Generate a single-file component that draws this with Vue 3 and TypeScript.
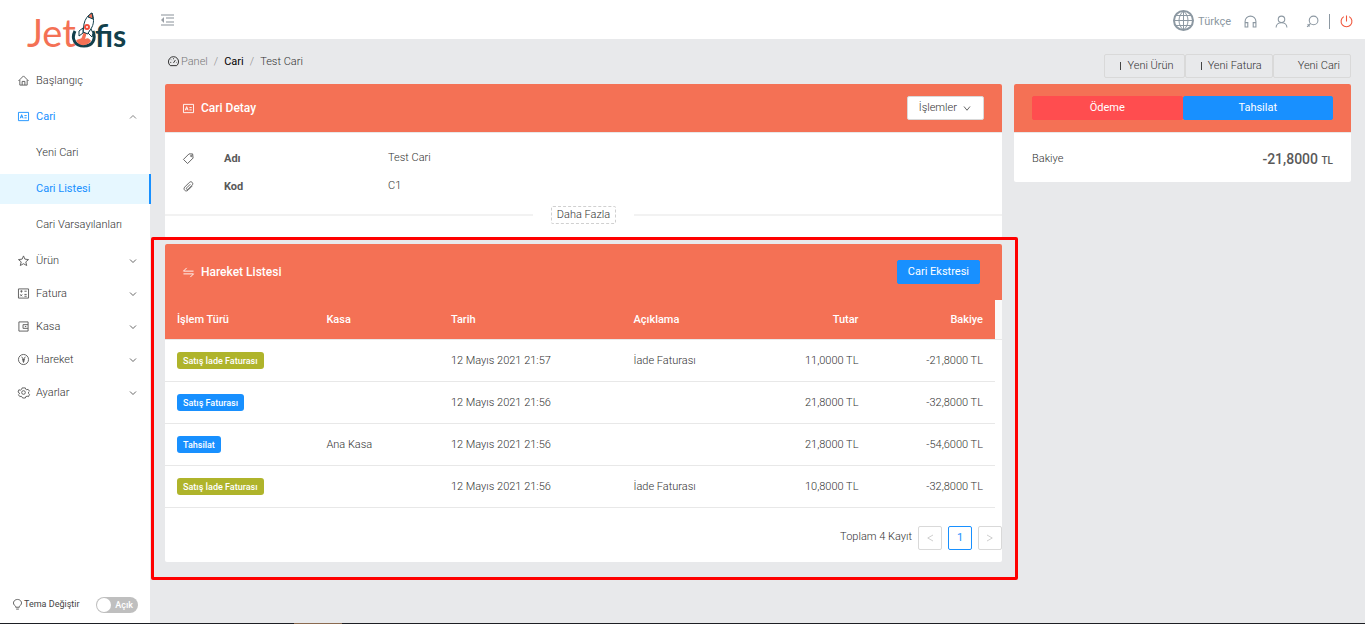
<script setup lang="ts">
import { ref } from 'vue'

interface MenuItem { label: string; icon: string }
interface Movement { type: string; kind: 'return' | 'normal'; safe: string; date: string; note: string; amount: string; balance: string }

const icons: Record<string, string> = {
  home: 'M1 13 12 2l11 11M4 11v11h16V11M9 22v-8h6v8',
  card: 'M1 3h22v18H1zM5 16l3-8 3 8M6 13h4M14 10h5M14 15h5',
  star: 'm12 2 3 7 8 1-6 5 2 8-7-4-7 4 2-8-6-5 8-1z',
  invoice: 'M1 2h22v20H1zM5 7h5M7.500 5v5M14 7h5M5 14l4 4M9 14l-4 4M14 14h5M14 18h5',
  wallet: 'M2 2h20v20H2zM22 8H11v8h11M15 12h3',
  money: 'M12 1a11 11 0 1 0 0 22 11 11 0 0 0 0-22zM8 6l4 6 4-6M12 12v7M9 12h6M9 15h6',
  gear: 'm9 2-1 3-3 2-3-1-2 5 3 2v2l-2 2 3 4 3-1 2 2 1 2h6l1-3 3-1 3 1 2-5-2-2v-3l2-2-3-4-3 1-2-1-1-3zM12 8a4 4 0 1 0 0 8 4 4 0 0 0 0-8z',
  dash: 'M5 21a11 11 0 1 1 14 0zM12 15l4-6M5 14h2M7 8l1 1M12 5v2M18 14h1',
  tag: 'M13 2h8l1 9-12 12L1 14zM18 5a1 1 0 1 0 0 3 1 1 0 0 0 0-3z',
  clip: 'm20 11-9 9c-5 5-12-2-7-7L14 3c4-4 10 2 6 6l-9 9c-2 2-5-1-3-3l8-8',
  swap: 'M23 9H1l7-7M1 15h22l-7 7',
  headset: 'M2 22V12a10 10 0 0 1 20 0v10h-5v-8h5M2 14h5v8H2z',
  user: 'M12 2a6 6 0 1 0 0 12 6 6 0 0 0 0-12zM2 23c0-12 20-12 20 0',
  search: 'M14 2a8 8 0 1 0 0 16 8 8 0 0 0 0-16zM8 16l-6 6M3 17l4 4',
  power: 'M12 1v11M7 3a10 10 0 1 0 10 0',
  bulb: 'M8 18v-2C-1 10 4 1 12 1s13 9 4 15v2zM9 22h6',
}

const mainMenu: MenuItem[] = [
  { label: 'Ürün', icon: 'star' },
  { label: 'Fatura', icon: 'invoice' },
  { label: 'Kasa', icon: 'wallet' },
  { label: 'Hareket', icon: 'money' },
  { label: 'Ayarlar', icon: 'gear' },
]
const columns = ['İşlem Türü', 'Kasa', 'Tarih', 'Açıklama', 'Tutar', 'Bakiye']
const movements: Movement[] = [
  { type: 'Satış İade Faturası', kind: 'return', safe: '', date: '12 Mayıs 2021 21:57', note: 'İade Faturası', amount: '11,0000 TL', balance: '-21,8000 TL' },
  { type: 'Satış Faturası', kind: 'normal', safe: '', date: '12 Mayıs 2021 21:56', note: '', amount: '21,8000 TL', balance: '-32,8000 TL' },
  { type: 'Tahsilat', kind: 'normal', safe: 'Ana Kasa', date: '12 Mayıs 2021 21:56', note: '', amount: '21,8000 TL', balance: '-54,6000 TL' },
  { type: 'Satış İade Faturası', kind: 'return', safe: '', date: '12 Mayıs 2021 21:56', note: 'İade Faturası', amount: '10,8000 TL', balance: '-32,8000 TL' },
]
const dark = ref(false)
</script>

<template>
  <div class="app">
    <div class="shell">
      <aside class="sidebar">
        <a class="logo" href="#" aria-label="Jetofis">
          <svg width="110" height="50" viewBox="0 0 110 50">
            <text class="logo-text" x="1" y="37" fill="#f47155">Jet</text>
            <text class="logo-text end" x="69" y="37" fill="#123f4b">fis</text>
            <path d="M49 21c-4 8 0 15 9 15s12-7 9-15" fill="none" stroke="#123f4b" stroke-width="3" />
            <path d="M50 31c2-3 5-1 6-4l2-6 3 1-2 7c3-2 5 0 6 2-3 5-11 6-15 0z" fill="#f47155" />
            <path d="m57 22 1-8c1-5 4-9 8-11 2 5 2 10 0 14l-4 7z" fill="#fff" stroke="#123f4b" stroke-width="1" />
            <path d="M62 7c1-2 2-3 4-4l1 6z" fill="#f47155" stroke="#123f4b" stroke-width="1" />
            <circle cx="61" cy="17" r="2" fill="#fff" stroke="#f04d3c" stroke-width="2" />
            <path d="m57 18-4 3v5l4-3zM65 19l2 4-1 4-4-4z" fill="#fff" stroke="#123f4b" stroke-width="1" />
          </svg>
        </a>
        <nav class="menu">
          <a class="item" href="#"><svg class="icon" viewBox="0 0 24 24"><path :d="icons.home" /></svg>Başlangıç</a>
          <a class="item open" href="#"><svg class="icon" viewBox="0 0 24 24"><path :d="icons.card" /></svg>Cari
            <svg class="chev" viewBox="0 0 8 8"><path d="m0 6 4-4 4 4" /></svg></a>
          <a class="item sub" href="#">Yeni Cari</a>
          <a class="item sub active" href="#">Cari Listesi</a>
          <a class="item sub" href="#">Cari Varsayılanları</a>
          <div class="group">
            <a v-for="m in mainMenu" :key="m.label" class="item" href="#">
              <svg class="icon" viewBox="0 0 24 24"><path :d="icons[m.icon]" /></svg>{{ m.label }}
              <svg class="chev" viewBox="0 0 8 8"><path d="m0 2 4 4 4-4" /></svg>
            </a>
          </div>
        </nav>
        <label class="theme">
          <svg class="icon" viewBox="0 0 24 24"><path :d="icons.bulb" /></svg>
          <span>Tema Değiştir</span>
          <span class="switch"><input v-model="dark" type="checkbox" role="switch" /><span class="switch-text">Açık</span></span>
        </label>
      </aside>

      <div class="page">
        <header class="topbar">
          <button class="plain fold" aria-label="Menü">
            <svg width="13" height="12" viewBox="0 0 13 12"><path d="M0 1h13M5 4h8M5 8h8M0 11h13" stroke="#c4c8cc" stroke-width="2" /><path d="M3 3v6L0 6z" fill="#999fa6" /></svg>
          </button>
          <div class="tools">
            <a class="lang" href="#">
              <svg width="21" height="21" viewBox="0 0 21 21" fill="none" stroke="#8c98a2"><circle cx="10.500" cy="10.500" r="9.500" stroke-width="2" /><path d="M10.500 1v19M1 10.500h19M3 5.500h15M3 15.500h15M10.500 1c-6 5-6 14 0 19M10.500 1c6 5 6 14 0 19" /></svg>
              <span>Türkçe</span></a>
            <button class="plain" aria-label="Destek"><svg class="icon tool" viewBox="0 0 24 24"><path :d="icons.headset" /></svg></button>
            <button class="plain" aria-label="Kullanıcı"><svg class="icon tool" viewBox="0 0 24 24"><path :d="icons.user" /></svg></button>
            <button class="plain" aria-label="Ara"><svg class="icon tool" viewBox="0 0 24 24"><path :d="icons.search" /></svg></button>
            <span class="sep"></span>
            <button class="plain" aria-label="Çıkış"><svg class="icon tool power" viewBox="0 0 24 24"><path :d="icons.power" /></svg></button>
          </div>
        </header>

        <main class="content">
          <div class="crumb-row">
            <nav class="crumbs">
              <svg class="icon" viewBox="0 0 24 24"><path :d="icons.dash" /></svg>
              <a class="muted" href="#">Panel</a><i>/</i><a class="dark" href="#">Cari</a><i>/</i><span>Test Cari</span>
            </nav>
            <div class="actions">
              <button class="btn"><span class="bar"></span>Yeni Ürün</button>
              <button class="btn"><span class="bar"></span>Yeni Fatura</button>
              <button class="btn last">Yeni Cari</button>
            </div>
          </div>

          <div class="columns">
            <div class="left">
              <section class="card">
                <div class="card-head">
                  <h2><svg class="icon" viewBox="0 0 24 24"><path :d="icons.card" /></svg>Cari Detay</h2>
                  <button class="btn white">İşlemler<svg class="chev" viewBox="0 0 8 8"><path d="m0 2 4 5 4-5" /></svg></button>
                </div>
                <dl class="details">
                  <div><svg class="icon" viewBox="0 0 24 24"><path :d="icons.tag" /></svg><dt>Adı</dt><dd>Test Cari</dd></div>
                  <div><svg class="icon" viewBox="0 0 24 24"><path :d="icons.clip" /></svg><dt>Kod</dt><dd>C1</dd></div>
                </dl>
                <div class="divider"><button class="more">Daha Fazla</button></div>
              </section>

              <section class="card list">
                <div class="card-head tall">
                  <h2><svg class="icon" viewBox="0 0 24 24"><path :d="icons.swap" /></svg>Hareket Listesi</h2>
                  <button class="btn primary">Cari Ekstresi</button>
                </div>
                <div class="table-wrap">
                  <table>
                    <colgroup><col class="w-type" /><col class="w-safe" /><col class="w-date" /><col class="w-num" /><col class="w-num" /><col class="w-num" /></colgroup>
                    <thead><tr><th v-for="c in columns" :key="c" scope="col">{{ c }}</th></tr></thead>
                    <tbody>
                      <tr v-for="(m, i) in movements" :key="i">
                        <td><span class="tag" :class="m.kind">{{ m.type }}</span></td>
                        <td>{{ m.safe }}</td><td>{{ m.date }}</td><td>{{ m.note }}</td><td>{{ m.amount }}</td><td>{{ m.balance }}</td>
                      </tr>
                    </tbody>
                  </table>
                  <div class="gutter"></div>
                </div>
                <div class="pager">
                  <span class="total">Toplam 4 Kayıt</span>
                  <button aria-label="Önceki" disabled><svg class="chev" viewBox="0 0 8 8"><path d="M8 0 1 4l7 4" /></svg></button>
                  <button class="current">1</button>
                  <button aria-label="Sonraki" disabled><svg class="chev" viewBox="0 0 8 8"><path d="m0 0 7 4-7 4" /></svg></button>
                </div>
              </section>
            </div>

            <section class="card right">
              <div class="card-head">
                <div class="pay"><button class="btn danger">Ödeme</button><button class="btn primary">Tahsilat</button></div>
              </div>
              <div class="balance"><span>Bakiye</span><strong>-21,8000 <small>TL</small></strong></div>
            </section>
          </div>
        </main>
      </div>
    </div>
    <div class="baseline"><span></span></div>
  </div>
</template>

<style>
body { margin: 0; }
</style>

<style scoped>
* { box-sizing: border-box; }
.app { min-height: 100vh; display: flex; flex-direction: column; font: 300 11px/18px Roboto, "Liberation Sans", sans-serif; color: #333; background: #e8e9eb; }
a { color: inherit; text-decoration: none; }
button { font: inherit; color: inherit; cursor: pointer; }
.shell { flex: 1; display: flex; }
.icon { width: 11px; height: 11px; flex: none; fill: none; stroke: currentColor; stroke-width: 2; overflow: visible; }
.chev { width: 6px; height: 6px; flex: none; fill: none; stroke: currentColor; overflow: visible; }
.plain { padding: 0; border: 0; background: none; display: flex; }

.sidebar { width: 150px; flex: none; background: #fff; display: flex; flex-direction: column; }
.logo { display: block; height: 62px; padding: 10px 0 0 26px; }
.logo svg { overflow: visible; }
.logo-text { font: 400 38px Lato, sans-serif; }
.logo-text.end { font-size: 32px; font-weight: 700; }
.logo-text.end { font-size: 30px; }
.menu { padding-top: 4px; }
.item { height: 30px; margin-bottom: 6px; padding: 0 14px 0 18px; display: flex; align-items: center; gap: 7px; }
.item .chev { margin-left: auto; }
.item .icon { margin-bottom: 1px; color: #595959; }
.open, .open .icon { color: #1890ff; font-weight: 400; }
.open .chev { color: #595959; }
.sub { padding-left: 36px; }
.active { background: #e6f7ff; color: #1890ff; font-weight: 400; margin-right: -1px; border-right: 2px solid #1890ff; position: relative; }
.group .item { margin-bottom: 3px; }
.theme { margin-top: auto; padding: 0 12px 10px; display: flex; align-items: center; font-size: 9px; font-weight: 400; color: #444; }
.theme .icon { margin-right: 1px; color: #595959; }
.switch { margin-left: auto; display: grid; align-items: center; width: 42px; height: 16px; }
.switch input { grid-area: 1 / 1; appearance: none; margin: 0; width: 42px; height: 16px; border-radius: 8px; background: #bfbfbf; display: flex; padding: 1px; }
.switch input::before { content: ""; width: 14px; height: 14px; border-radius: 7px; background: #fff; }
.switch input:checked { background: #1890ff; justify-content: flex-end; }
.switch-text { grid-area: 1 / 1; justify-self: end; margin-right: 5px; font-size: 9px; font-weight: 500; color: #fff; pointer-events: none; }

.page { flex: 1; min-width: 0; }
.topbar { height: 39px; background: #fff; display: flex; justify-content: space-between; padding: 0 12px 0 11px; }
.fold { align-self: center; }
.tools { display: flex; align-items: center; gap: 18px; padding-top: 4px; color: #8c98a2; }
.lang { display: flex; align-items: center; gap: 4px; margin-right: -5px; font-weight: 400; }
.lang svg { margin-bottom: 2px; }
.tool { width: 13px; height: 13px; }
.sep { width: 1px; height: 15px; background: #8c98a2; margin: 0 -8px; }
.power { color: #f0563c; }

.content { padding: 0 14px 60px 15px; }
.crumb-row { height: 45px; display: flex; justify-content: space-between; align-items: center; }
.crumbs { display: flex; align-items: center; padding-left: 3px; }
.crumbs .icon { color: #222; margin-right: 2px; }
.crumbs i { font-style: normal; color: #8c8c8c; margin: 0 6px; }
.muted { color: #777; }
.dark { color: #000; font-weight: 400; }
.actions { display: flex; padding-top: 8px; }
.btn { height: 24px; padding: 0 11px; border: 1px solid #d9d9d9; border-radius: 2px; background: transparent; display: flex; align-items: center; justify-content: center; line-height: 18px; }
.actions .btn { padding-right: 10px; }
.bar { width: 1px; height: 8px; background: #444; margin: 0 6px 0 4px; }
.actions .last { padding-left: 24px; }
.columns { display: flex; align-items: flex-start; gap: 12px; }
.left { flex: 837 1 0; min-width: 0; display: flex; flex-direction: column; gap: 6px; }
.right { flex: 337 1 0; min-width: 0; }
.card { background: #fff; border-radius: 2px; }
.card-head { height: 49px; padding: 0 18px; background: #f47155; color: #fff; border-bottom: 1px solid #e8e8e8; border-radius: 2px 2px 0 0; display: flex; align-items: center; justify-content: space-between; }
.card-head h2 { margin: 0; font-size: 12px; line-height: 18px; font-weight: 500; display: flex; align-items: center; gap: 7px; }
.card-head .btn { font-weight: 400; }
.card-head .white { background: #fff; color: #333; gap: 7px; padding-right: 13px; font-weight: 300; }
.primary { background: #1890ff; border-color: #1890ff; color: #fff; }
.tall .primary { padding: 0 10px; }
.danger { background: #ff4d4f; border-color: #ff4d4f; color: #fff; }
.pay { display: flex; flex: 1; }
.pay .btn { flex: 1; }
.balance { height: 49px; padding: 3px 18px 0; display: flex; align-items: center; justify-content: space-between; }
.balance strong { font-size: 14px; font-weight: 500; color: #595959; padding-top: 2px; }
.balance small { font-size: 10px; }
.details { margin: 0; padding: 11px 18px 0; }
.details div { height: 28px; display: flex; align-items: center; }
.details .icon { color: #595959; }
.details dt { width: 164px; margin-left: 30px; padding-top: 2px; font-weight: 700; color: #595959; }
.details dd { margin: 0; }
.divider { height: 38px; padding-bottom: 9px; display: flex; align-items: center; gap: 18px; }
.divider::before, .divider::after { content: ""; flex: 1; height: 2px; background: #f2f2f2; }
.more { height: 18px; padding: 0 5px; border: 1px dashed #d0d0d0; border-radius: 2px; background: #fff; line-height: 16px; }

.list { position: relative; }
.list::after { content: ""; position: absolute; inset: -7px -16px -18px -14px; border: 3px solid #f00; border-radius: 2px; pointer-events: none; }
.tall { height: 56px; padding-right: 22px; border-bottom: 0; }
.table-wrap { display: flex; }
.gutter { width: 7px; height: 40px; background: #fafafa; border-bottom: 1px solid #e8e8e8; }
table { flex: 1; min-width: 0; table-layout: fixed; border-collapse: separate; border-spacing: 0; }
.w-type { width: 18%; } .w-safe { width: 15%; } .w-date { width: 22%; } .w-num { width: 15%; }
th, td { height: 42px; padding: 0 12px; text-align: left; border-bottom: 1px solid #e8e8e8; white-space: nowrap; }
th { height: 40px; background: #f47155; color: #fff; font-weight: 500; }
th:nth-child(n+5), td:nth-child(n+5) { text-align: right; }
.tag { display: inline-block; padding: 1px 6px 0; line-height: 16px; border-radius: 3px; color: #fff; font-size: 9px; font-weight: 500; vertical-align: middle; }
.return { background: #afb42b; }
.normal { background: #1890ff; }
.pager { height: 54px; padding-top: 18px; display: flex; justify-content: flex-end; gap: 6px; }
.total { line-height: 22px; }
.pager button { width: 24px; height: 24px; padding: 0; border: 1px solid #d9d9d9; border-radius: 2px; background: #fff; display: flex; align-items: center; justify-content: center; color: #bfbfbf; }
.pager .current { border-color: #1890ff; color: #1890ff; font-weight: 400; }
.baseline { height: 1px; background: #1d1f24; }
.baseline span { display: block; width: 48px; height: 1px; margin-left: 294px; background: #8a6a50; }
</style>
